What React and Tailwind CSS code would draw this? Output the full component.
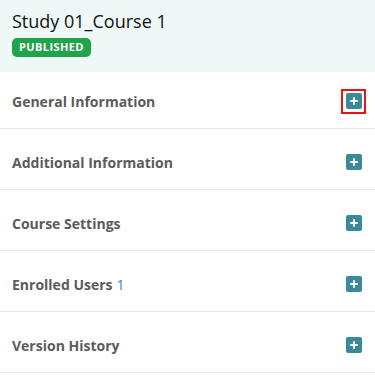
import React from 'react';

const sections = [
  { label: 'General Information', highlight: true },
  { label: 'Additional Information' },
  { label: 'Course Settings' },
  { label: 'Enrolled Users', count: 1 },
  { label: 'Version History' },
];

const PlusBox = () => (
  <span className="flex h-[16px] w-[16px] items-center justify-center rounded-[2px] bg-[#3a8a9b]">
    <svg width="10" height="10" viewBox="0 0 10 10">
      <path d="M5 1.2v7.6M1.2 5h7.6" stroke="#fff" strokeWidth="1.9" />
    </svg>
  </span>
);

export default function App() {
  return (
    <div className="w-[375px] h-[380px] bg-white overflow-hidden" style={{ fontFamily: '"Open Sans", sans-serif' }}>
      <div className="bg-[#eef9f7] px-3 pt-[9px] h-[72px]">
        <h1 className="text-[18px] leading-[24px] text-[#111]">Study 01_Course 1</h1>
        <span className="mt-[5px] inline-flex h-[19px] items-center rounded-[5px] bg-[#21a34a] px-[7px] text-[11px] font-bold tracking-[0.4px] text-white">
          PUBLISHED
        </span>
      </div>
      {sections.map((s, i) => (
        <div
          key={s.label}
          className={`flex items-center justify-between border-b border-[#e3e8ec] pl-3 pr-[9px] ${i === 0 ? 'h-[57px] pt-[2px]' : 'h-[61px] pt-[6px]'}`}
        >
          <span className="text-[14px] font-bold text-[#5b5b5b]">
            {s.label}
            {s.count != null && <span className="ml-1 font-normal text-[#2f86cc]">{s.count}</span>}
          </span>
          {s.highlight ? (
            <span className="flex h-[25px] w-[25px] items-center justify-center border-2 border-[#ee1111]">
              <PlusBox />
            </span>
          ) : (
            <span className="flex h-[25px] w-[25px] items-center justify-center">
              <PlusBox />
            </span>
          )}
        </div>
      ))}
    </div>
  );
}
